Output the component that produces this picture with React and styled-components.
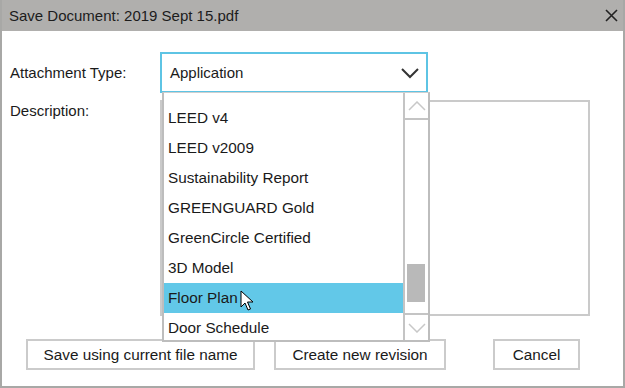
import React from "react";
import styled, { createGlobalStyle } from "styled-components";

const Global = createGlobalStyle`
  html, body { margin: 0; padding: 0; background: #fff; }
  body { font-family: "Liberation Sans", Arial, sans-serif; color: #1a1a1a; }
`;

const Window = styled.div`
  position: relative;
  width: 625px;
  height: 388px;
  box-sizing: border-box;
  border: 2px solid #a8a8a6;
  border-top: none;
  display: flex;
  flex-direction: column;
  background: #fff;
  overflow: hidden;
`;

const TitleBar = styled.div`
  height: 31px;
  margin: 0 -2px;
  background: #b0afad;
  display: flex;
  align-items: center;
  justify-content: space-between;
  padding: 0 7px 0 9px;
  font-size: 15px;
  color: #1c1c1c;
`;

const Body = styled.div`
  flex: 1;
  display: flex;
  flex-direction: column;
  padding: 21px 0 0 8px;
`;

const Row = styled.div`
  display: flex;
  align-items: ${(p) => (p.$top ? "flex-start" : "center")};
  margin-top: ${(p) => p.$mt || 0}px;
`;

const Label = styled.div`
  width: 150px;
  font-size: 15px;
  padding-top: ${(p) => p.$pt || 0}px;
`;

const Select = styled.div`
  width: 268px;
  height: 41px;
  box-sizing: border-box;
  border: 2px solid #5ec4e4;
  display: flex;
  align-items: center;
  justify-content: space-between;
  padding: 0 6px 0 8px;
  font-size: 15px;
`;

const TextArea = styled.div`
  width: 430px;
  height: 216px;
  box-sizing: border-box;
  border: 2px solid #cacaca;
`;

const Buttons = styled.div`
  display: flex;
  margin-top: 23px;
  padding-left: 16px;
`;

const Button = styled.div`
  height: 31px;
  box-sizing: border-box;
  border: 2px solid #cbcbcb;
  display: flex;
  align-items: center;
  justify-content: center;
  font-size: 15.3px;
  width: ${(p) => p.$w}px;
  margin-left: ${(p) => p.$ml || 0}px;
`;

const DropList = styled.div`
  position: absolute;
  left: 160px;
  top: 92px;
  width: 268px;
  height: 250px;
  box-sizing: border-box;
  border: 2px solid #bdbdbd;
  border-top: 1px solid #cfcfcf;
  background: #fff;
  display: flex;
  overflow: hidden;
`;

const Items = styled.div`
  flex: 1;
  margin-top: -20px;
`;

const Item = styled.div`
  height: 30px;
  display: flex;
  align-items: center;
  padding-left: 4px;
  font-size: 15.3px;
  background: ${(p) => (p.$sel ? "#62c8e8" : "transparent")};
`;

const ScrollBar = styled.div`
  width: 23px;
  border-left: 2px solid #c4c4c4;
  display: flex;
  flex-direction: column;
`;

const ArrowBtn = styled.div`
  height: 25px;
  display: flex;
  align-items: center;
  justify-content: center;
  ${(p) => (p.$up ? "border-bottom: 2px solid #c4c4c4;" : "border-top: 2px solid #c4c4c4;")}
`;

const Track = styled.div`
  flex: 1;
  position: relative;
`;

const Thumb = styled.div`
  position: absolute;
  left: 2px;
  right: 3px;
  top: 144px;
  height: 38px;
  background: #b9b9b9;
`;

const Cursor = styled.svg`
  position: absolute;
  left: 238px;
  top: 290px;
`;

const items = [
  "LEED v4",
  "LEED v2009",
  "Sustainability Report",
  "GREENGUARD Gold",
  "GreenCircle Certified",
  "3D Model",
  "Floor Plan",
  "Door Schedule",
];

export default function App() {
  return (
    <>
      <Global />
      <Window>
        <TitleBar>
          <span>Save Document: 2019 Sept 15.pdf</span>
          <svg width="13" height="13" viewBox="0 0 13 13">
            <path d="M1 1 L12 12 M12 1 L1 12" stroke="#222" strokeWidth="1.6" fill="none" />
          </svg>
        </TitleBar>
        <Body>
          <Row>
            <Label>Attachment Type:</Label>
            <Select>
              <span>Application</span>
              <svg width="20" height="12" viewBox="0 0 20 12">
                <path d="M2 2 L10 10 L18 2" stroke="#333" strokeWidth="2" fill="none" />
              </svg>
            </Select>
          </Row>
          <Row $top $mt={7}>
            <Label $pt={2}>Description:</Label>
            <TextArea />
          </Row>
          <Buttons>
            <Button $w={229}>Save using current file name</Button>
            <Button $w={172} $ml={19}>Create new revision</Button>
            <Button $w={87} $ml={47}>Cancel</Button>
          </Buttons>
        </Body>
        <DropList>
          <Items>
            <Item style={{ visibility: "hidden" }}>Application</Item>
            {items.map((t) => (
              <Item key={t} $sel={t === "Floor Plan"}>{t}</Item>
            ))}
          </Items>
          <ScrollBar>
            <ArrowBtn $up>
              <svg width="18" height="10" viewBox="0 0 18 10">
                <path d="M1 9 L9 1 L17 9" stroke="#c8c8c8" strokeWidth="1.5" fill="none" />
              </svg>
            </ArrowBtn>
            <Track>
              <Thumb />
            </Track>
            <ArrowBtn>
              <svg width="18" height="10" viewBox="0 0 18 10">
                <path d="M1 1 L9 9 L17 1" stroke="#c8c8c8" strokeWidth="1.5" fill="none" />
              </svg>
            </ArrowBtn>
          </ScrollBar>
        </DropList>
        <Cursor width="14" height="22" viewBox="0 0 14 22">
          <path d="M1 1 L1 17 L5 13 L8 20 L10.5 19 L7.5 12 L13 12 Z" fill="#fff" stroke="#000" strokeWidth="1" strokeLinejoin="round" />
        </Cursor>
      </Window>
    </>
  );
}
